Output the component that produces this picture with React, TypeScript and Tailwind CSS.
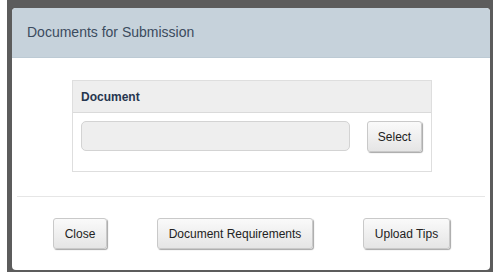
import React from 'react';

function Btn({ label, className = '' }: { label: string; className?: string }) {
  return (
    <button
      className={`h-[31px] rounded-[3px] border border-[#c9c9c9] bg-gradient-to-b from-[#fafafa] to-[#e5e5e5] text-[12px] text-[#222] shadow-[1px_1px_1px_rgba(0,0,0,0.35)] ${className}`}
    >
      {label}
    </button>
  );
}

export default function App() {
  return (
    <div className="w-[502px] h-[277px] bg-white pl-[7px] font-['Liberation_Sans',Arial,sans-serif]">
      <div className="w-[486px] h-[272px] bg-[#5c5c5c] pt-[8px] pl-[5px] pr-[3px] pb-[2px] flex">
        <div className="flex-1 flex flex-col rounded-[4px] bg-white overflow-hidden">
          <div className="h-[50px] bg-[#c6d2db] border-b border-[#bccad4] flex items-center pl-[15px]">
            <span className="text-[14px] text-[#3b4b5e]">Documents for Submission</span>
          </div>

          <div className="ml-[60px] mt-[22px] w-[360px] h-[92px] border border-[#dedede] flex flex-col">
            <div className="h-[32px] bg-[#eeeeee] border-b border-[#dadada] flex items-center pl-[8px]">
              <span className="text-[12px] font-bold text-[#26364f]">Document</span>
            </div>
            <div className="flex items-start pl-[8px] pt-[8px] gap-[17px]">
              <div className="w-[269px] h-[30px] rounded-[5px] border border-[#d3d3d3] bg-[#eeeeee]" />
              <Btn label="Select" className="w-[55px]" />
            </div>
          </div>

          <div className="mx-[5px] mt-[24px] h-px bg-[#e6e6e6]" />

          <div className="flex items-start pt-[21px]">
            <Btn label="Close" className="ml-[41px] w-[54px]" />
            <Btn label="Document Requirements" className="ml-[50px] w-[156px]" />
            <Btn label="Upload Tips" className="ml-[50px] w-[87px]" />
          </div>
        </div>
      </div>
    </div>
  );
}
